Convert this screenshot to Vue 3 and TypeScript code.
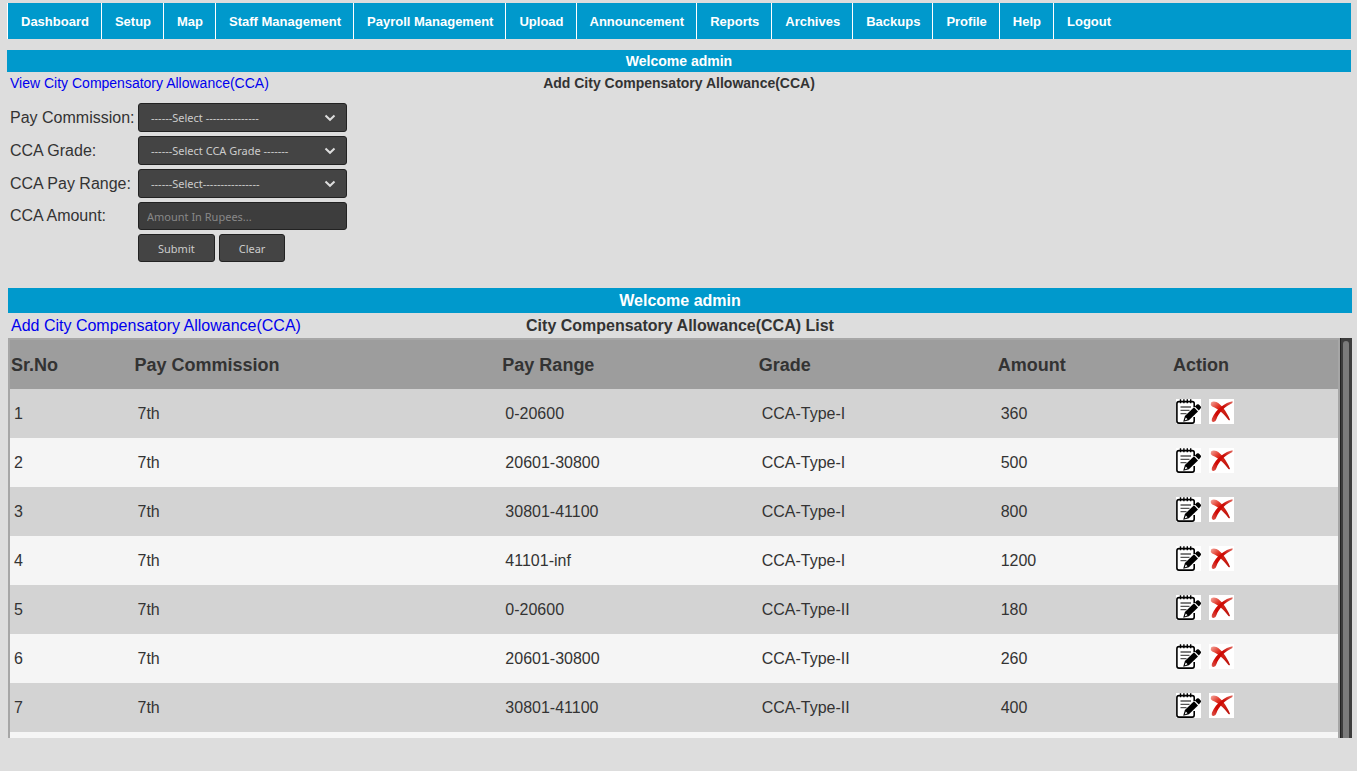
<script setup lang="ts">
import { ref } from 'vue'

interface Allowance {
  commission: string
  range: string
  grade: string
  amount: number
}

const menu: string[] = [
  'Dashboard', 'Setup', 'Map', 'Staff Management', 'Payroll Management', 'Upload',
  'Announcement', 'Reports', 'Archives', 'Backups', 'Profile', 'Help', 'Logout',
]

const selects = [
  { id: 'commission', label: 'Pay Commission:', placeholder: '------Select ---------------' },
  { id: 'grade', label: 'CCA Grade:', placeholder: '------Select CCA Grade -------' },
  { id: 'range', label: 'CCA Pay Range:', placeholder: '------Select----------------' },
]

const columns: string[] = ['Sr.No', 'Pay Commission', 'Pay Range', 'Grade', 'Amount', 'Action']

const rows: Allowance[] = [
  { commission: '7th', range: '0-20600', grade: 'CCA-Type-I', amount: 360 },
  { commission: '7th', range: '20601-30800', grade: 'CCA-Type-I', amount: 500 },
  { commission: '7th', range: '30801-41100', grade: 'CCA-Type-I', amount: 800 },
  { commission: '7th', range: '41101-inf', grade: 'CCA-Type-I', amount: 1200 },
  { commission: '7th', range: '0-20600', grade: 'CCA-Type-II', amount: 180 },
  { commission: '7th', range: '20601-30800', grade: 'CCA-Type-II', amount: 260 },
  { commission: '7th', range: '30801-41100', grade: 'CCA-Type-II', amount: 400 },
]

const amount = ref('')
</script>

<template>
  <div class="page">
    <nav class="menu" aria-label="Main">
      <a v-for="item in menu" :key="item" href="#">{{ item }}</a>
    </nav>

    <section class="entry">
      <div class="banner">Welcome admin</div>
      <div class="heading">
        <a href="#">View City Compensatory Allowance(CCA)</a>
        <h2>Add City Compensatory Allowance(CCA)</h2>
      </div>
      <form class="form" @submit.prevent>
        <template v-for="s in selects" :key="s.id">
          <label :for="s.id">{{ s.label }}</label>
          <div class="select">
            <select :id="s.id">
              <option>{{ s.placeholder }}</option>
            </select>
            <svg viewBox="0 0 12 8" aria-hidden="true"><path d="M1.5 1.5 6 5.8 10.5 1.5" /></svg>
          </div>
        </template>
        <label for="amount">CCA Amount:</label>
        <input id="amount" v-model="amount" type="text" placeholder="Amount In Rupees..." />
        <div class="buttons">
          <button type="submit">Submit</button>
          <button type="reset">Clear</button>
        </div>
      </form>
    </section>

    <section class="list">
      <div class="banner">Welcome admin</div>
      <div class="heading">
        <a href="#">Add City Compensatory Allowance(CCA)</a>
        <h2>City Compensatory Allowance(CCA) List</h2>
      </div>
      <div class="viewport">
        <table>
          <colgroup>
            <col class="c-no" /><col class="c-commission" /><col class="c-range" />
            <col class="c-grade" /><col class="c-amount" /><col class="c-action" />
          </colgroup>
          <thead>
            <tr>
              <th v-for="c in columns" :key="c" scope="col">{{ c }}</th>
            </tr>
          </thead>
          <tbody>
            <tr v-for="(row, i) in rows" :key="i">
              <td>{{ i + 1 }}</td>
              <td>{{ row.commission }}</td>
              <td>{{ row.range }}</td>
              <td>{{ row.grade }}</td>
              <td>{{ row.amount }}</td>
              <td>
                <div class="actions">
                  <a href="#" aria-label="Edit">
                    <svg viewBox="0 0 25 25">
                      <rect width="25" height="25" fill="#fff" />
                      <path d="M18.2 8V4.6Q18.2 2.6 16.2 2.6H3Q.9 2.6.9 4.7V22Q.9 24.1 3 24.1H16.2Q18.2 24.1 18.2 22V18" fill="none" stroke="#000" stroke-width="1.6" />
                      <path d="M4.5.3V4.2M7.9.3V4.2M11.3.3V4.2M14.7.3V4.2" stroke="#000" stroke-width="1.4" />
                      <path d="M4.5 8H15M4.5 11.3H13.5M4.5 14.7H10.5" stroke="#555" stroke-width="1.3" />
                      <path d="M7.2 22.8 8.9 16.9 18 8.3 22 12.6 12.9 21.2Z" fill="#000" />
                      <path d="M18.8 7.5 20.9 5.6Q22 4.7 22.9 5.6L24.7 7.6Q25.4 8.6 24.5 9.5L22.8 11.5Z" fill="#000" />
                      <path d="M8.7 21.5 9.8 18.6 11.5 20.3Z" fill="#fff" />
                    </svg>
                  </a>
                  <a href="#" aria-label="Delete">
                    <svg viewBox="0 0 25 25">
                      <defs>
                        <linearGradient :id="'fade' + i" x1="0" y1="0" x2="1" y2="1">
                          <stop offset="0" stop-color="#f3a99f" />
                          <stop offset=".35" stop-color="#e02a1c" />
                          <stop offset="1" stop-color="#b8100a" />
                        </linearGradient>
                        <linearGradient :id="'sweep' + i" x1="0" y1="1" x2="1" y2="0">
                          <stop offset="0" stop-color="#dc5a50" />
                          <stop offset=".3" stop-color="#d00a05" />
                          <stop offset=".65" stop-color="#cc0c06" />
                          <stop offset="1" stop-color="#e06a60" />
                        </linearGradient>
                      </defs>
                      <rect width="25" height="25" fill="#fff" />
                      <path d="M2 3.6Q4.2 1.8 7.4 3.1C12.4 5.4 17.8 13.2 20.9 20.4Q20.8 21.9 19.5 20.9C14.7 14.8 9.4 9.8 3.2 7.5Q1 5.8 2 3.6Z" :fill="`url(#fade${i})`" />
                      <path d="M23.6 2.3C16.5 3.6 7.2 9.8 3 19.4Q2 22.9 4.6 22.9 6.9 22.6 7.5 20C9.9 13.8 16 7.4 23.4 4.1Z" :fill="`url(#sweep${i})`" />
                    </svg>
                  </a>
                </div>
              </td>
            </tr>
            <tr><td colspan="6"></td></tr>
          </tbody>
        </table>
        <div class="track" aria-hidden="true"><div class="thumb"></div></div>
      </div>
    </section>
  </div>
</template>

<style>
body {
  background: #ddd;
}
</style>

<style scoped>
.page {
  padding: 3px 5px 33px 7px;
  color: #333;
  font: 16px/20px "Liberation Sans", Arial, sans-serif;
}

.menu {
  display: flex;
  margin-right: 1px;
  background: #09c;
}

.menu a {
  padding: 1px 12px 0 13px;
  border-left: 1px solid #fff;
  color: #fff;
  font-size: 13px;
  font-weight: bold;
  line-height: 35px;
  text-decoration: none;
  white-space: nowrap;
}

.banner {
  background: #09c;
  color: #fff;
  font-weight: bold;
  line-height: 25px;
  text-align: center;
}

.heading {
  display: grid;
  grid-template-columns: 1fr auto 1fr;
  padding: 0 3px;
  line-height: 25px;
}

.heading a {
  color: #00e;
  text-decoration: none;
}

.heading h2 {
  margin: 0;
  font: inherit;
  font-weight: bold;
}

.entry {
  margin: 11px 1px 26px 0;
}

.entry .banner,
.entry .heading {
  font-size: 14px;
  line-height: 22px;
}

.form {
  display: grid;
  grid-template-columns: 125px 209px;
  row-gap: 4px;
  column-gap: 3px;
  align-items: center;
  margin-top: 9px;
  padding-left: 3px;
}

.form label {
  white-space: nowrap;
}

.select {
  position: relative;
}

.select select,
.form input,
.form button {
  box-sizing: border-box;
  height: 28px;
  margin: 0;
  border: 1px solid #222;
  border-radius: 3px;
  background: #444;
  color: #ccc;
  font: 11px "Noto Sans", sans-serif;
}

.select select {
  display: block;
  width: 100%;
  height: 29px;
  padding: 0 30px 0 12px;
  appearance: none;
}

.select svg {
  position: absolute;
  top: 11px;
  right: 11px;
  width: 12px;
  height: 8px;
  fill: none;
  stroke: #ddd;
  stroke-width: 2;
  pointer-events: none;
}

.form input {
  width: 100%;
  padding: 0 8px;
  background: #3d3d3d;
}

.form input::placeholder {
  color: #888;
}

.buttons {
  display: flex;
  grid-column: 2;
  gap: 4px;
}

.form button {
  padding: 0 19px;
}

.list {
  margin-left: 1px;
}

.viewport {
  display: flex;
  height: 400px;
  overflow: hidden;
}

table {
  flex: 1;
  box-sizing: border-box;
  border: 2px solid #a6a6a6;
  border-spacing: 0;
  table-layout: fixed;
  height: max-content;
}

.c-no { width: 9.3%; }
.c-commission { width: 27.7%; }
.c-range { width: 19.3%; }
.c-grade { width: 18%; }
.c-amount { width: 13.2%; }
.c-action { width: 12.5%; }

th {
  height: 49px;
  padding: 0 1px;
  background: #9d9d9d;
  font-size: 18px;
  text-align: left;
}

td {
  height: 49px;
  padding: 0 4px;
}

tbody tr:nth-child(odd) {
  background: #d3d3d3;
}

tbody tr:nth-child(even) {
  background: #f5f5f5;
}

.actions {
  display: flex;
  gap: 8px;
  padding-bottom: 4px;
}

.actions svg {
  display: block;
  width: 25px;
  height: 25px;
}

.track {
  box-sizing: border-box;
  width: 12px;
  padding: 3px 3px 0 2px;
  border-left: 1px solid #222;
  background: #3d3d3d;
}

.thumb {
  height: 480px;
  border-radius: 3px;
  background: #7b7b7b;
}
</style>
